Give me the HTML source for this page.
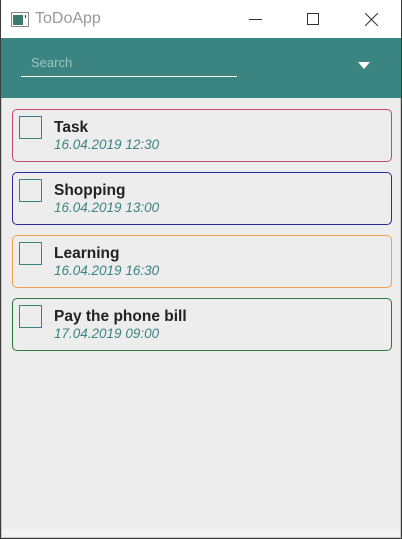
<!DOCTYPE html>
<html><head><style>
*{margin:0;padding:0;box-sizing:border-box}
body{width:402px;height:539px;background:#3c3c3c;position:relative;overflow:hidden;font-family:"Liberation Sans",sans-serif}
.win{position:absolute;left:1px;top:0;width:400px;height:538px;background:#ededed}
.title{position:absolute;left:0;top:0;width:400px;height:38px;background:#fff}
.title .t{position:absolute;left:34px;top:10px;font-size:16px;color:#999}
.hdr{position:absolute;left:0;top:38px;width:400px;height:60px;background:#3a8482}
.search{position:absolute;left:20px;top:17px;width:216px;height:22px;border-bottom:1px solid #fff;color:#9ec4c2;font-size:13px;padding-left:10px}
.content{position:absolute;left:0;top:98px;width:400px;height:440px;border:1px solid #c8c8c8;border-top:none;background:#ededed}
.foot{position:absolute;left:1px;top:529px;width:398px;height:8px;background:#f3f3f3}
.card{position:absolute;left:11px;width:380px;height:53px;border:1px solid;border-radius:5px}
.cb{position:absolute;left:6px;top:6px;width:23px;height:23px;border:1px solid #3a8482}
.n{position:absolute;left:41px;top:9px;font-weight:bold;font-size:15.5px;color:#222}
.d{position:absolute;left:41px;top:27px;font-style:italic;font-size:13.5px;color:#3a8482}
</style></head><body>
<div class="win">
<div class="title">
<svg style="position:absolute;left:10px;top:12px" width="18" height="15"><rect x="0.5" y="0.5" width="17" height="14" fill="#fff" stroke="#888"/><rect x="2" y="3" width="10" height="10" fill="#3a7a70"/><rect x="14" y="3" width="1" height="3" fill="#333"/></svg>
<div class="t">ToDoApp</div>
<div style="position:absolute;left:248px;top:19px;width:13px;height:1px;background:#333"></div>
<div style="position:absolute;left:306px;top:13px;width:12px;height:12px;border:1px solid #333"></div>
<svg style="position:absolute;left:364px;top:13px" width="13" height="13"><path d="M0 0L13 13M13 0L0 13" stroke="#333" stroke-width="1"/></svg>
</div>
<div class="hdr"><div class="search">Search</div>
<svg style="position:absolute;left:357px;top:24px" width="12" height="8"><path d="M0 0H12L6 7Z" fill="#fff"/></svg></div>
<div class="content"></div>
<div class="foot"></div>
<div class="card" style="top:109px;border-color:#c04a70"><div class="cb"></div><div class="n">Task</div><div class="d">16.04.2019 12:30</div></div>
<div class="card" style="top:172px;border-color:#2a2a9a"><div class="cb"></div><div class="n">Shopping</div><div class="d">16.04.2019 13:00</div></div>
<div class="card" style="top:235px;border-color:#f0a050"><div class="cb"></div><div class="n">Learning</div><div class="d">16.04.2019 16:30</div></div>
<div class="card" style="top:298px;border-color:#2a7a3a"><div class="cb"></div><div class="n">Pay the phone bill</div><div class="d">17.04.2019 09:00</div></div>
</div>
</body></html>
